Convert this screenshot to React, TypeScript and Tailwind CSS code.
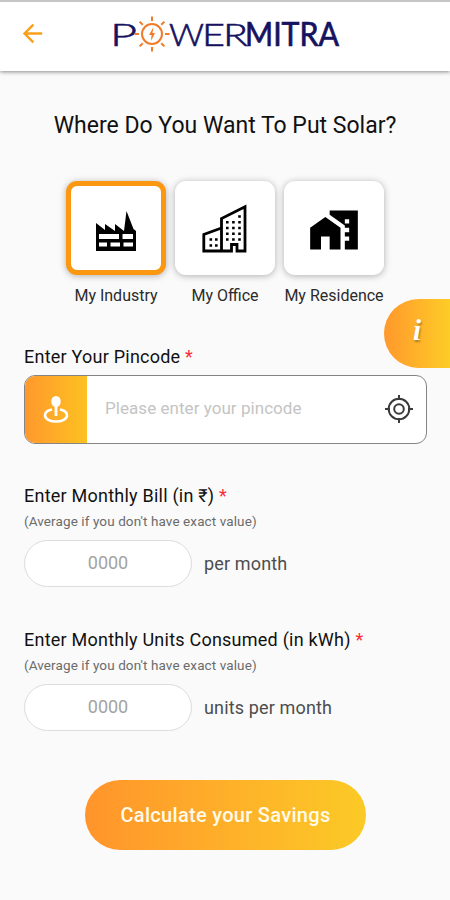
import { useState } from "react";
import type { ReactNode } from "react";
import { MdArrowBack, MdHomeWork } from "react-icons/md";

function Logo() {
  return (
    <svg width="240" height="50" viewBox="110 10 240 50" fill="none">
      <g fill="#15125f" stroke="#15125f" strokeWidth="0.6" fontFamily="Lato, sans-serif" fontSize="32" fontWeight="300">
        <text x="110" y="46" textLength="27" lengthAdjust="spacingAndGlyphs">P</text>
        <text x="169" y="46" textLength="35" lengthAdjust="spacingAndGlyphs">W</text>
        <text x="202" y="46" textLength="23" lengthAdjust="spacingAndGlyphs">E</text>
        <text x="223" y="46" textLength="25" lengthAdjust="spacingAndGlyphs">R</text>
      </g>
      <g fill="#15125f" stroke="#15125f" strokeWidth="0.7" fontFamily="Lato, sans-serif" fontSize="32">
        <text x="245" y="46" textLength="94" lengthAdjust="spacingAndGlyphs">MITRA</text>
      </g>
      <g stroke="#f07c2b" strokeWidth="2">
        <circle cx="152" cy="34" r="10" />
        <path d="M152 16.500v4.500M152 47v4.500M134.500 34h4.500M165 34h4.500M139.600 21.600l3.200 3.200M161.200 43.200l3.200 3.200M139.600 46.400l3.200-3.200M161.200 24.800l3.200-3.200" />
      </g>
      <path d="M153.500 27l-4.500 8h2.500l-.5 6 4-8h-2.500z" fill="#f07c2b" />
    </svg>
  );
}

function IndustryIcon() {
  return (
    <svg width="42" height="42" viewBox="0 0 42 42" className="mt-[5px]">
      <path
        fillRule="evenodd"
        fill="#000"
        d="M1 41V13l9 7v-6l10 7v-7l9 7L31.500 1l7 18L41 21v20zM4 24v5h20v-5zM27.500 24v5H38v-5zM4 32.500v4h8v-4zM15.500 32.500v4H25v-4zM28.500 32.500v4H38v-4z"
      />
    </svg>
  );
}

function OfficeIcon() {
  return (
    <svg width="48" height="50" viewBox="0 0 48 50" fill="none" stroke="#000" strokeWidth="2.800">
      <path d="M20.500 48H2.800V31.500l17.700-6.500M20.500 48V15.500L44 3.800V48h-8v-6.500h-5.500V48z" />
      <path
        d="M8.500 36.500h2.600M14 36.500h2.600M8.500 42.500h2.600M14 42.500h2.600M37.200 13.500h2.600M25 19.300h2.600M31.100 19.300h2.600M37.200 19.300h2.600M25 25h2.600M31.100 25h2.600M37.200 25h2.600M25 30.800h2.600M31.100 30.800h2.600M37.200 30.800h2.600M25 36.500h2.600M31.100 36.500h2.600M37.200 36.500h2.600"
        strokeWidth="2.600"
      />
    </svg>
  );
}

function PinIcon() {
  return (
    <svg width="26" height="30" viewBox="0 0 26 30" fill="none" stroke="#fff">
      <ellipse cx="13" cy="6.500" rx="4.700" ry="5.500" fill="#fff" stroke="none" />
      <path d="M13 10v11" strokeWidth="2.800" />
      <path d="M9 14.500c-4 .8-7 2.800-7 5.700 0 3.800 5 6.300 11 6.300s11-2.500 11-6.300c0-2.900-3-4.900-7-5.700" strokeWidth="2.600" />
    </svg>
  );
}

function LocateIcon() {
  return (
    <svg width="30" height="30" viewBox="0 0 30 30" fill="none" stroke="#3b3b3b" strokeWidth="2">
      <circle cx="15" cy="15" r="10.300" />
      <circle cx="15" cy="15" r="4.800" />
      <path d="M15 1v5M15 24v5M1 15h5M24 15h5" />
    </svg>
  );
}

const PLACES: { id: string; label: string; icon: ReactNode }[] = [
  { id: "industry", label: "My Industry", icon: <IndustryIcon /> },
  { id: "office", label: "My Office", icon: <OfficeIcon /> },
  { id: "residence", label: "My Residence", icon: <MdHomeWork size={52} className="mt-[3px]" /> },
];

function Label({ children }: { children: ReactNode }) {
  return (
    <h2 className="text-[18px] leading-6 tracking-[0.23px] whitespace-nowrap text-[#111]">
      {children} <span className="text-red-500">*</span>
    </h2>
  );
}

function AmountField({ label, unit }: { label: string; unit: string }) {
  return (
    <div className="h-[144px]">
      <Label>{label}</Label>
      <p className="mt-[3px] text-[13.500px] leading-5 tracking-[0.1px] text-[#6b6b6b]">
        (Average if you don't have exact value)
      </p>
      <div className="mt-[9px] flex items-center gap-3">
        <input
          placeholder="0000"
          className="h-[47px] w-[168px] rounded-full border border-[#dcdcdc] bg-white pb-[3px] text-center text-[18px] outline-none placeholder:text-[#a3a3a3]"
        />
        <span className="text-[18px] tracking-[0.15px] text-[#4d4d4d]">{unit}</span>
      </div>
    </div>
  );
}

export default function App() {
  const [place, setPlace] = useState("industry");

  return (
    <div className="relative flex h-[900px] w-[450px] flex-col overflow-hidden bg-[#fafafa] font-[Roboto,sans-serif]">
      <header className="flex h-[71px] shrink-0 items-start border-t-2 border-[#c6c6c6] bg-white pl-[18px] shadow-[0_1px_4px_rgba(0,0,0,0.45)]">
        <button className="mt-[17px]">
          <MdArrowBack size={29} color="#f9a01b" />
        </button>
        <div className="mt-2 ml-[63px]">
          <Logo />
        </div>
      </header>

      <main className="flex flex-col px-6">
        <h1 className="mt-[39px] text-center text-[23px] leading-8 whitespace-nowrap text-[#111]">
          Where Do You Want To Put Solar?
        </h1>

        <div className="mt-[39px] ml-[42px] flex gap-[9px]">
          {PLACES.map((p) => (
            <button key={p.id} onClick={() => setPlace(p.id)} className="flex w-[100px] flex-col items-center">
              <span
                className={`flex h-[94px] w-full items-center justify-center rounded-[11px] bg-white shadow-[0_1px_7px_rgba(0,0,0,0.3)] ${
                  place === p.id ? "border-[5px] border-[#fb980f]" : ""
                }`}
              >
                {p.icon}
              </span>
              <span className="mt-[11px] text-[16px] leading-5 whitespace-nowrap text-[#2b2b2b]">
                {p.label}
              </span>
            </button>
          ))}
        </div>

        <div className="mt-[39px]">
          <Label>Enter Your Pincode</Label>
        </div>
        <div className="mt-[6px] flex h-[69px] w-[403px] items-center overflow-hidden rounded-[11px] border border-[#858585] bg-white">
          <div className="-ml-px flex h-[69px] w-[63px] items-center justify-center bg-linear-to-r from-[#ff982c] to-[#fcc121]">
            <PinIcon />
          </div>
          <input
            placeholder="Please enter your pincode"
            className="ml-[18px] w-[266px] pb-[2px] text-[17px] tracking-[0.05px] outline-none placeholder:text-[#c4c4c4]"
          />
          <button className="mb-[2px] ml-[13px]">
            <LocateIcon />
          </button>
        </div>

        <div className="mt-10">
          <AmountField label="Enter Monthly Bill (in ₹)" unit="per month" />
          <AmountField label="Enter Monthly Units Consumed (in kWh)" unit="units per month" />
        </div>

        <button className="mt-2 ml-[61px] h-[70px] w-[281px] rounded-full bg-linear-to-r from-[#ff942b] to-[#fbca26] text-[20px] font-medium tracking-[0.3px] text-[#fffbe8]">
          Calculate your Savings
        </button>
      </main>

      <button className="absolute top-[299px] right-0 flex h-[69px] w-[66px] items-center justify-center rounded-l-full bg-linear-to-r from-[#ff982c] to-[#fdcc26] pb-[6px] font-['Liberation_Serif',serif] text-[29px] font-bold italic text-white text-shadow-[1px_2px_2px_rgba(0,0,0,0.3)]">
        i
      </button>
    </div>
  );
}
